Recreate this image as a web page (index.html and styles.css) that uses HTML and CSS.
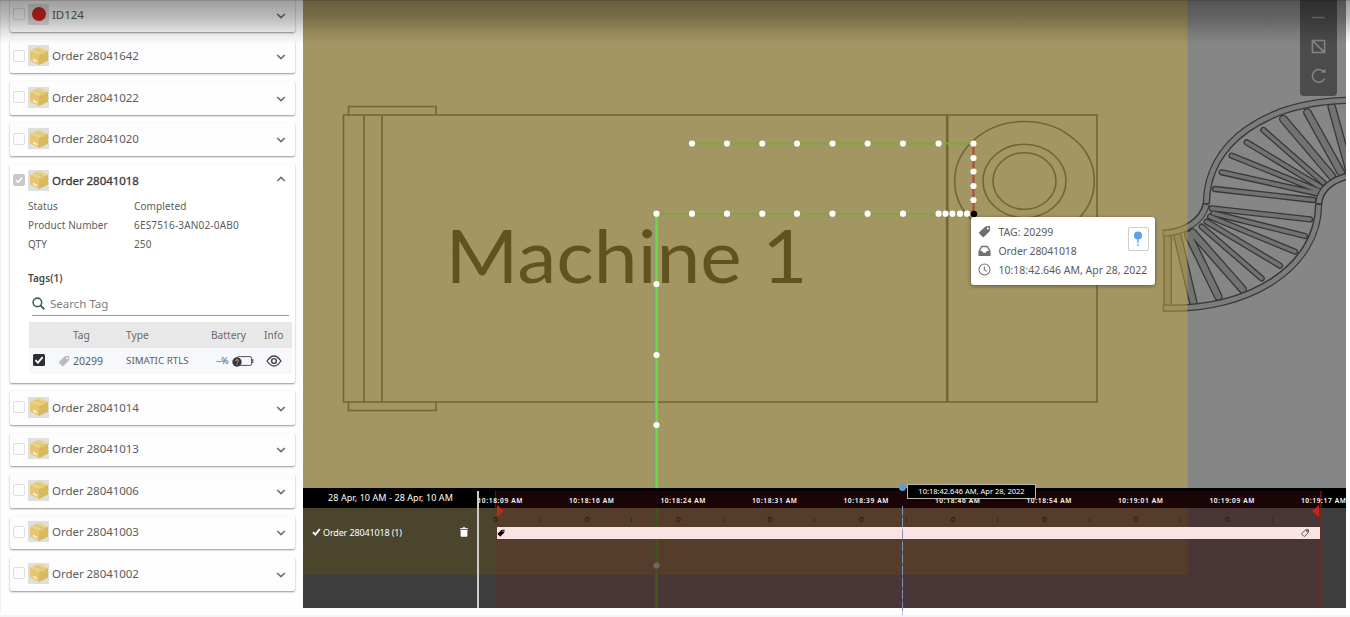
FILE: index.html
```html
<!DOCTYPE html>
<html lang="en">
<head>
<meta charset="utf-8">
<title>Order tracking</title>
<link rel="stylesheet" href="styles.css">
</head>
<body>
<svg class="defs" aria-hidden="true">
  <symbol id="box" viewBox="0 0 20 20">
    <path d="M10 1 L19 5 V14.5 L10 19 L1 14.5 V5Z" fill="#e3c772"/>
    <path d="M10 1 L19 5 L10 9 L1 5Z" fill="#ead384"/>
    <path d="M10 9 L19 5 V14.5 L10 19Z" fill="#d8b95e"/>
    <path d="M5 3.2 L14 7.2 V9 L16 8 V6.3 L7 2.3Z" fill="#dec575"/>
    <path d="M4 12.5 L8 14.5 V16.5 L4 14.5Z" fill="#f8efd0"/>
  </symbol>
  <symbol id="chev" viewBox="0 0 10 6"><path d="M1.2 1 L5 4.6 L8.8 1" fill="none" stroke="#707070" stroke-width="1.7"/></symbol>
  <symbol id="tag" viewBox="0 0 14 14"><path fill-rule="evenodd" d="M8 1.6 L12.4 1 Q13.2 1 13.2 1.8 L12.6 6.6 L6.3 12.8 Q5.6 13.4 5 12.8 L1.2 9 Q.6 8.4 1.2 7.8Z M10.6 2.6 a1.1 1.1 0 1 0 .01 0Z"/></symbol>
</svg>
<div class="app">
  <aside class="sidebar">
    <section class="card"><header class="head"><i class="check"></i><span class="thumb"><i class="dot"></i></span><span class="name">ID124</span><svg class="chev"><use href="#chev"/></svg></header></section>
    <section class="card"><header class="head"><i class="check"></i><span class="thumb"><svg><use href="#box"/></svg></span><span class="name">Order 28041642</span><svg class="chev"><use href="#chev"/></svg></header></section>
    <section class="card"><header class="head"><i class="check"></i><span class="thumb"><svg><use href="#box"/></svg></span><span class="name">Order 28041022</span><svg class="chev"><use href="#chev"/></svg></header></section>
    <section class="card"><header class="head"><i class="check"></i><span class="thumb"><svg><use href="#box"/></svg></span><span class="name">Order 28041020</span><svg class="chev"><use href="#chev"/></svg></header></section>
    <section class="card open">
      <header class="head"><i class="check on"><svg viewBox="0 0 12 12"><path d="M2.5 6.2 L5 8.6 L9.7 3.2" fill="none" stroke="#fff" stroke-width="1.8"/></svg></i><span class="thumb"><svg><use href="#box"/></svg></span><span class="name">Order 28041018</span><svg class="chev up"><use href="#chev"/></svg></header>
      <dl class="facts">
        <dt>Status</dt><dd>Completed</dd>
        <dt>Product Number</dt><dd class="pn">6ES7516-3AN02-0AB0</dd>
        <dt>QTY</dt><dd>250</dd>
      </dl>
      <h3 class="tags">Tags(1)</h3>
      <div class="search"><svg viewBox="0 0 14 14"><circle cx="5.8" cy="5.8" r="4.6" fill="none" stroke="#3f5f63" stroke-width="1.7"/><path d="M9 9 L13.2 13.2" stroke="#3f5f63" stroke-width="2"/></svg><span>Search Tag</span></div>
      <div class="row th"><span></span><span class="c-tag">Tag</span><span>Type</span><span class="c-bat">Battery</span><span>Info</span></div>
      <div class="row td">
        <span><svg class="cb" viewBox="0 0 12 12"><rect width="12" height="12" rx="1.5" fill="#2d2f31"/><path d="M2.4 6.2 L4.9 8.6 L9.7 3.2" fill="none" stroke="#fff" stroke-width="1.8"/></svg></span>
        <span class="c-val"><svg class="tg"><use href="#tag"/></svg>20299</span>
        <span class="c-type">SIMATIC RTLS</span>
        <span class="c-pow">--%<svg viewBox="0 0 22 12"><rect x="5" y="1.6" width="14.5" height="8.8" rx="1.5" fill="none" stroke="#555" stroke-width="1"/><path d="M20.8 4v4" stroke="#555" stroke-width="1.2"/><circle cx="5" cy="7" r="4.7" fill="#3a3a3a"/><path d="M3.7 6 q0-1.4 1.4-1.4 q1.3 0 1.3 1.2 q0 .8-1.2 1.5v.5M5.2 8.7v1" stroke="#ccc" stroke-width=".8" fill="none"/></svg></span>
        <span class="c-eye"><svg viewBox="0 0 16 12"><path d="M1 6 Q8 -4 15 6 Q8 16 1 6Z" fill="none" stroke="#444" stroke-width="1.3"/><circle cx="8" cy="6" r="2.4" fill="none" stroke="#444" stroke-width="1.4"/></svg></span>
      </div>
    </section>
    <section class="card"><header class="head"><i class="check"></i><span class="thumb"><svg><use href="#box"/></svg></span><span class="name">Order 28041014</span><svg class="chev"><use href="#chev"/></svg></header></section>
    <section class="card"><header class="head"><i class="check"></i><span class="thumb"><svg><use href="#box"/></svg></span><span class="name">Order 28041013</span><svg class="chev"><use href="#chev"/></svg></header></section>
    <section class="card"><header class="head"><i class="check"></i><span class="thumb"><svg><use href="#box"/></svg></span><span class="name">Order 28041006</span><svg class="chev"><use href="#chev"/></svg></header></section>
    <section class="card"><header class="head"><i class="check"></i><span class="thumb"><svg><use href="#box"/></svg></span><span class="name">Order 28041003</span><svg class="chev"><use href="#chev"/></svg></header></section>
    <section class="card"><header class="head"><i class="check"></i><span class="thumb"><svg><use href="#box"/></svg></span><span class="name">Order 28041002</span><svg class="chev"><use href="#chev"/></svg></header></section>
  </aside>

  <main class="map">
    <svg class="plan" viewBox="303 0 1043 608">
      <defs>
        <g id="rollers">
          <path d="M225 567L520 600M245 517L530 580M275 467L535 572M320 427L540 560M370 390L550 548"/>
          <path d="M215 625L510 658M220 640L495 708M210 650L465 755M200 665L420 797M185 680L365 835"/>
        </g>
        <g id="rollers-wide">
          <path d="M430 357L575 528M502 337L603 518M575 320L628 510"/>
          <path d="M158 698L308 868M145 705L235 890M113 710L160 908M83 710V912"/>
        </g>
      </defs>
      <g fill="none" stroke="#262626" stroke-width="1.6">
        <path d="M343.5 115H1097V402H343.5ZM364 115V402M382 115V402M348.500 115V106.500H436V115M348.500 402V410.500H436V402"/>
        <path d="M947.200 115V402" stroke-width="2.6"/>
        <ellipse cx="1024.500" cy="181" rx="69.800" ry="59.500"/>
        <ellipse cx="1024.500" cy="181" rx="41.500" ry="36.800"/>
        <ellipse cx="1024.500" cy="181" rx="31.500" ry="28.300"/>
      </g>
      <text class="machine" x="445.500" y="282.500" textLength="362" lengthAdjust="spacingAndGlyphs">Machine 1</text>
      <g transform="translate(1140 0) scale(.33333)" fill="none" stroke-linecap="round">
        <g stroke="#383838">
          <use href="#rollers" stroke-width="19"/>
          <use href="#rollers-wide" stroke-width="26"/>
        </g>
        <g stroke="#727272">
          <use href="#rollers" stroke-width="11"/>
          <use href="#rollers-wide" stroke-width="18"/>
        </g>
        <g stroke-linecap="butt">
          <g stroke="#383838" stroke-width="22">
            <path d="M199 612C200 430 375 302 640 301M536 612C540 565 580 535 640 525"/>
            <path d="M199 612C185 665 135 697 68 700M536 612C535 800 330 934 68 924"/>
          </g>
          <g stroke="#7c7c7c" stroke-width="14">
            <path d="M199 609C200 430 375 302 640 301M536 609C540 565 580 535 640 525"/>
            <path d="M199 615C185 665 135 697 71 700M536 615C535 800 330 934 71 924"/>
          </g>
        </g>
      </g>
      <rect x="303" y="0" width="884.500" height="574.500" fill="#c0a640" fill-opacity=".5"/>
      <g fill="none">
        <path d="M692 143.500H973.500M656.500 214H938" stroke="#7ca83f" stroke-width="2"/>
        <path d="M656.500 215.300H938" stroke="#7f9f7c" stroke-width=".8"/>
        <path d="M973.500 143.500V213.500" stroke="#a9573a" stroke-width="2.400"/>
        <path d="M938 213.500H973" stroke="#a9573a" stroke-width="1.500"/>
        <path d="M655 214V608" stroke="#6aa07a" stroke-width="1"/>
        <path d="M656.600 214V608" stroke="#68d843" stroke-width="2.800"/>
      </g>
      <path class="stops" d="M692 143.500h0M727 143.500h0M762.300 143.500h0M797 143.500h0M832.500 143.500h0M867.600 143.500h0M903 143.500h0M938.600 143.500h0M973.500 143.500h0M973.500 158h0M973.500 171.500h0M973.500 186h0M973.500 200h0M656.500 213.700h0M692 213.700h0M727 213.700h0M762.300 213.700h0M797 213.700h0M832.500 213.700h0M867.600 213.700h0M903 213.700h0M938.600 213.700h0M945.500 213.700h0M952.500 213.700h0M960 213.700h0M967 213.700h0M656.500 284h0M656.500 355h0M656.500 425h0M656.500 565.500h0"/>
      <circle cx="974" cy="214" r="3.200"/>
    </svg>

    <nav class="tools">
      <svg viewBox="0 0 16 16"><path d="M1.500 8H14.500"/></svg>
      <svg viewBox="0 0 16 16"><path d="M1.500 1.500H14.500V14.500H1.500ZM2 2L14 14M7 1.500H1.500V7"/></svg>
      <svg viewBox="0 0 16 16"><path d="M13.500 4A6.800 6.800 0 1 0 14.500 11.200"/><path d="M10.500 4.800L15.500 5V.8Z" fill="#858585" stroke="none"/></svg>
    </nav>

    <div class="tip">
      <div class="tip-row"><svg viewBox="0 0 14 14" fill="#707070"><use href="#tag"/></svg><span class="t1">TAG: 20299</span></div>
      <div class="tip-row"><svg viewBox="0 0 14 14"><path fill="#707070" fill-rule="evenodd" d="M3.500 2H10.500L13.500 7.500V12Q13.500 13 12.500 13H1.500Q.5 13 .5 12V7.500ZM4.300 3.500L2.200 7.500H4.600L5.500 9.300H8.500L9.400 7.500H11.800L9.700 3.500Z"/></svg><span class="t2">Order 28041018</span></div>
      <div class="tip-row"><svg viewBox="0 0 14 14" fill="none" stroke="#707070" stroke-width="1.100"><circle cx="7" cy="7" r="5.900"/><path d="M6.800 3.400V7.200L9.400 9"/></svg><span class="t3">10:18:42.646 AM, Apr 28, 2022</span></div>
      <div class="pin"><svg viewBox="0 0 12 16"><circle cx="6" cy="4.600" r="4" fill="#5aa2e6"/><path d="M6 8V12M6 13V15" stroke="#5aa2e6" stroke-width="1.300"/></svg></div>
    </div>

    <section class="timeline">
      <div class="tl-left">
        <div class="range">28 Apr, 10 AM - 28 Apr, 10 AM</div>
        <div class="track"><svg class="tick" viewBox="0 0 9 8"><path d="M1 4.300L3.400 6.500L7.800 1" fill="none" stroke="#fff" stroke-width="1.900"/></svg><span>Order 28041018 (1)</span><svg class="bin" viewBox="0 0 8 10"><path d="M0 1.200H2.500L3 .3H5L5.500 1.200H8V2.300H0ZM.6 3H7.400V9Q7.400 9.800 6.600 9.800H1.400Q.6 9.800 .6 9Z" fill="#fff"/></svg></div>
      </div>
      <div class="tl-right">
        <div class="axis"><span>10:18:09 AM</span><span>10:18:16 AM</span><span>10:18:24 AM</span><span>10:18:31 AM</span><span>10:18:39 AM</span><span>10:18:46 AM</span><span>10:18:54 AM</span><span>10:19:01 AM</span><span>10:19:09 AM</span><span>10:19:17 AM</span></div>
        <div class="ticks"><i>o</i><i>o</i><i>o</i><i>o</i><i>o</i><i>o</i><i>o</i><i>o</i><i>o</i></div>
        <div class="bar"><svg viewBox="0 0 14 14"><use href="#tag"/></svg><svg viewBox="0 0 14 14" fill="none" stroke="#333" stroke-width="1.400"><use href="#tag"/></svg></div>
      </div>
      <div class="span"></div>
      <svg class="flags" viewBox="0 0 826 16"><path d="M2 2L9 8L2 14ZM824 2L817 8L824 14Z" fill="#c4261a"/></svg>
      <div class="divider"></div>
      <div class="cursor"></div>
      <div class="knob"></div>
      <div class="stamp">10:18:42.646 AM, Apr 28, 2022</div>
    </section>
  </main>
  <div class="shade"></div>
</div>
</body>
</html>
```
FILE: styles.css
```css
* { box-sizing: border-box; }
body { margin: 0; background: #fefefe; font-family: "Noto Sans", "Open Sans", sans-serif; color: #5c5c5c; }
.defs { position: absolute; width: 0; height: 0; }
.app { position: relative; display: flex; width: 1350px; height: 617px; overflow: hidden; border-bottom: 2px solid #f3f3f3; }

.sidebar { width: 303px; height: 615px; padding: 0 8px 0 10px; border-left: 1px solid #f0f0f0; display: flex; flex-direction: column; gap: 8px; margin-top: -2px; flex: none; }
.card { flex: none; width: 285px; margin-left: -1px; height: 33.5px; background: #fdfdfd; border-radius: 2px; box-shadow: 0 1px 2px rgba(0,0,0,.42); }
.card.open { height: 219px; background: #fff; }
.head { display: flex; align-items: center; height: 32px; padding: 0 9px 0 3px; }
.check { width: 12px; height: 12px; border: 1px solid #dfdfdf; border-radius: 2px; flex: none; display: flex; }
.check.on { background: #c9c9c9; border-color: #c9c9c9; }
.thumb { width: 21px; height: 21px; margin: 0 3px; background: #dfdfdf; display: flex; align-items: center; justify-content: center; flex: none; }
.thumb svg { width: 20px; height: 20px; }
.dot { width: 14px; height: 14px; border-radius: 50%; background: #d3261b; }
.name { font-size: 11.5px; letter-spacing: -.04px; white-space: nowrap; flex: 1; }
.open .name { color: #3a3a3a; -webkit-text-stroke: .3px #3a3a3a; }
.chev { width: 10px; height: 6px; margin-top: 3px; }
.chev.up { transform: rotate(180deg); margin-top: -2px; }

.facts { display: grid; grid-template-columns: 106px 1fr; grid-auto-rows: 19.2px; margin: 1px 0 0 18px; font-size: 10px; line-height: 19px; letter-spacing: .1px; }
.facts dd { margin: 0; }
.facts .pn { letter-spacing: .18px; }
.tags { margin: 14px 0 0 18px; font-size: 10px; font-weight: 600; line-height: 18px; color: #4a4a4a; letter-spacing: .05px; }
.search { display: flex; align-items: center; gap: 5px; height: 23px; margin: 6px 6px 0 22px; border-bottom: 1px solid #999; font-size: 11.5px; letter-spacing: 0; color: #7c7c7c; }
.search svg { width: 13px; height: 13px; }
.row { display: grid; grid-template-columns: 44px 53px 85px 53px 1fr; align-items: center; margin: 0 3px 0 19px; font-size: 10.500px; white-space: nowrap; }
.th { height: 26px; margin-top: 6px; background: #e8e8e8; color: #6a6a6a; font-size: 10.200px; }
.td { height: 26px; background: #f7f8fc; }
.c-val, .c-pow { display: flex; align-items: center; }
.cb { width: 12px; height: 12px; margin: -2px 0 0 4px; display: block; }
.tg { width: 12px; height: 12px; fill: #bbb; margin: 0 3px 0 -15px; }
.c-type { font-size: 9.800px; }
.c-pow { font-size: 9px; margin-left: 5px; gap: 4px; letter-spacing: -.3px; }
.c-pow svg { width: 22px; height: 12px; }
.c-eye svg { width: 16px; height: 12px; display: block; margin-left: 2px; }

.map { position: relative; width: 1043px; height: 608px; background: #868686; flex: none; }
.plan { display: block; width: 1043px; height: 608px; }
.machine { font: 73.500px Lato, "Open Sans", sans-serif; fill: #000; }
.stops { stroke: #fff; stroke-width: 6.200px; stroke-linecap: round; fill: none; }

.tools { position: absolute; left: 997px; top: 0; width: 37px; height: 96px; border-radius: 0 0 4px 4px; background: #4b4b4b; display: flex; flex-direction: column; align-items: center; padding-top: 10px; gap: 14px; }
.tools svg { width: 15px; height: 15px; fill: none; stroke: #858585; stroke-width: 1.600; }

.tip { position: absolute; left: 667.500px; top: 217px; width: 184px; height: 68px; background: #fff; border-radius: 3px; box-shadow: 0 1px 4px rgba(0,0,0,.4); padding: 5px 7px; font-size: 10.500px; }
.tip-row { display: flex; align-items: center; gap: 8px; height: 19.2px; white-space: nowrap; }
.tip-row svg { width: 13px; height: 13px; }
.t2 { letter-spacing: -.12px; }
.pin { position: absolute; right: 6px; top: 10px; width: 21px; height: 24px; border: 1px solid #ccc; border-radius: 2px; display: flex; align-items: center; justify-content: center; }
.pin svg { width: 12px; height: 16px; }

.timeline { position: absolute; left: 0; top: 488px; width: 1043px; height: 120px; display: flex; background: linear-gradient(#000 0 20px, rgba(0,0,0,.54) 20px); color: #fff; }
.tl-left { width: 175px; flex: none; }
.range { height: 20px; line-height: 20px; text-align: center; font-size: 9px; letter-spacing: .08px; }
.track { display: flex; align-items: center; gap: 2px; height: 18px; margin-top: 15px; padding: 0 10px 0 9px; font-size: 9px; white-space: nowrap; }
.track span { flex: 1; letter-spacing: -.14px; }
.tick { width: 9px; height: 8px; }
.bin { width: 8px; height: 10px; }
.tl-right { width: 868px; overflow: hidden; }
.axis { display: flex; height: 20px; padding-top: 4px; margin-left: -23.500px; width: 930px; font-size: 6.600px; font-weight: 600; letter-spacing: .65px; line-height: 17px; position: relative; z-index: 2; }
.axis span { width: 91.500px; text-align: center; flex: none; }
.ticks { display: flex; margin-left: -28px; width: 860px; height: 19px; align-items: center; font-size: 8px; color: #1d1511; position: relative; z-index: 2; padding-top: 3px; }
.ticks i { font-style: normal; width: 91.500px; flex: none; display: flex; padding-left: 43px; gap: 42px; line-height: 10px; }
.ticks i::after { content: ""; width: 1px; height: 4px; margin-top: 4px; background: #3d241c; }
.bar { position: relative; z-index: 2; width: 823px; height: 12px; margin-left: 19px; background: #f9e4e3; display: flex; align-items: center; justify-content: space-between; padding: 0 11px 0 0; }
.bar svg { width: 8px; height: 8px; overflow: visible; }
.span { position: absolute; left: 192px; top: 3px; width: 827px; height: 117px; background: rgba(132,27,30,.2); border-left: 1px solid rgba(170,25,20,.6); border-right: 2px solid rgba(150,30,25,.5); }
.flags { position: absolute; left: 192px; top: 15px; width: 826px; height: 16px; z-index: 3; }
.divider { position: absolute; left: 174px; top: 3px; width: 2px; height: 117px; background: #ccc; z-index: 3; }
.cursor { position: absolute; left: 599px; top: 18px; width: 1px; height: 111px; z-index: 3; background: repeating-linear-gradient(#7c95b3 0 9px, #7c95b366 9px 12px); }
.knob { position: absolute; left: 596px; top: -4px; width: 7px; height: 7px; border-radius: 50%; background: #5b9be0; z-index: 3; }
.stamp { position: absolute; left: 604px; top: -4px; width: 129px; height: 15px; background: #000; border: 1px solid #b9b9a9; font-size: 7.500px; line-height: 13px; text-align: center; white-space: nowrap; z-index: 4; }

.shade { position: absolute; left: 0; top: 0; width: 1350px; height: 44px; background: linear-gradient(rgba(0,0,0,.46) 0 1px, rgba(0,0,0,.37) 1px, rgba(0,0,0,.26) 18px, rgba(0,0,0,.1) 32px, rgba(0,0,0,0)); }
```
